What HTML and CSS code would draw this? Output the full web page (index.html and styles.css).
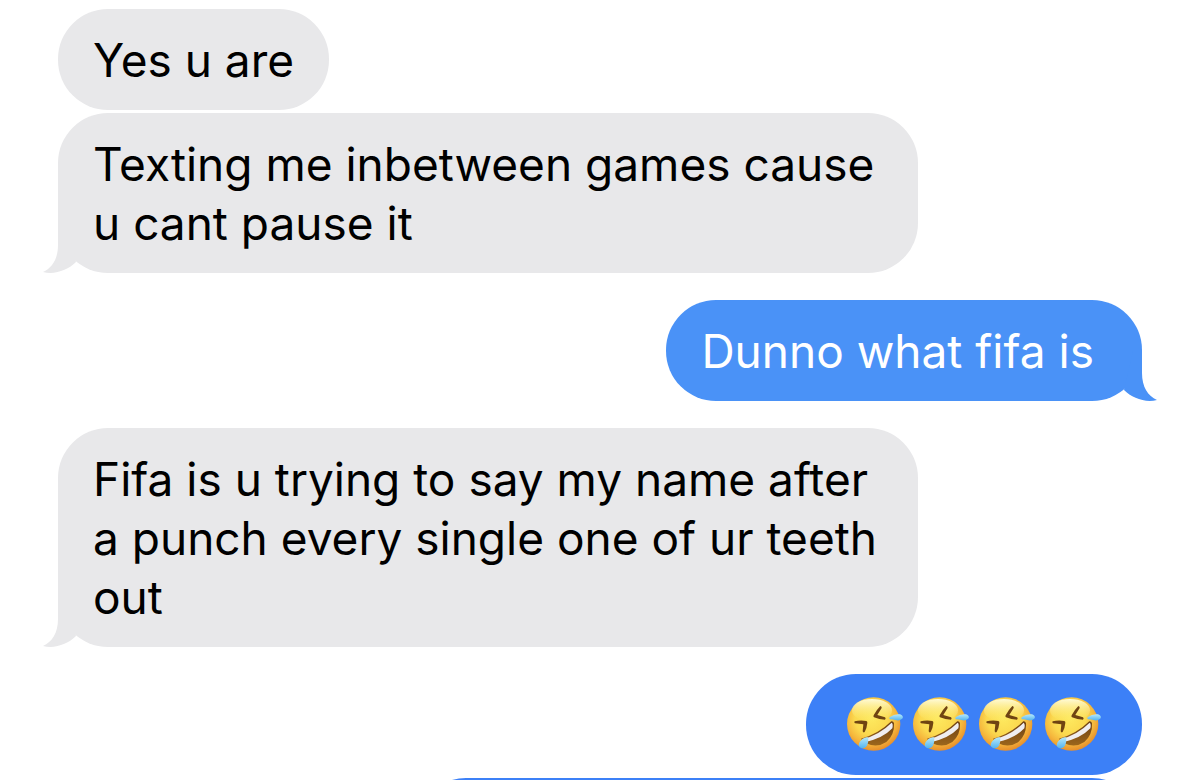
FILE: index.html
```html
<!DOCTYPE html>
<html lang="en">
<head>
  <meta charset="UTF-8">
  <meta name="viewport" content="width=device-width, initial-scale=1">
  <title>Messages</title>
  <link rel="stylesheet" href="styles.css">
</head>
<body>

  <!-- Shared shapes -->
  <svg class="shapes" aria-hidden="true">
    <defs>
      <radialGradient id="face" gradientUnits="userSpaceOnUse" cx="94" cy="82" r="100">
        <stop offset="0" stop-color="#fde95f"/>
        <stop offset="0.5" stop-color="#fbd94f"/>
        <stop offset="0.76" stop-color="#f5b63c"/>
        <stop offset="1" stop-color="#e58a2a"/>
      </radialGradient>
      <linearGradient id="shine" x1="0" y1="0" x2="0" y2="1">
        <stop offset="0" stop-color="#fffbd8"/>
        <stop offset="1" stop-color="#fdec6c" stop-opacity="0"/>
      </linearGradient>
      <linearGradient id="tear" x1="0" y1="0" x2="0" y2="1">
        <stop offset="0" stop-color="#b5e8fb"/>
        <stop offset="1" stop-color="#55b4ee"/>
      </linearGradient>
      <linearGradient id="mouth" x1="0" y1="0" x2="0" y2="1">
        <stop offset="0" stop-color="#6b3f14"/>
        <stop offset="1" stop-color="#9c661c"/>
      </linearGradient>
    </defs>
    <symbol id="tail" viewBox="0 0 36 50">
      <path d="M15 0 V22 C15 36 9 45 0 49 C12 52 25 47 33 39 L24 0 Z"/>
    </symbol>
    <symbol id="rofl" viewBox="6 15 198 177">
      <circle cx="101" cy="99" r="80" fill="url(#face)"/>
      <ellipse cx="96" cy="58" rx="60" ry="34" fill="url(#shine)"/>
      <g fill="#6f4412">
        <path d="M121 45 Q126 46 125 51 L112 72 L135 79 Q139 82 135 86 Q118 86 102 79 Q99 77 101 73 Q110 56 121 45 Z"/>
        <path d="M44 91 Q61 87 79 90 Q83 92 82 96 Q81 110 74 123 Q70 126 68 121 L70 100 L45 97 Q41 94 44 91 Z"/>
      </g>
      <path d="M63 143 Q114 130 154 91 Q160 90 162 97 Q164 132 139 153 Q111 172 79 157 Q66 151 63 143 Z" fill="url(#mouth)"/>
      <path d="M66 145 Q118 132 155 95 Q160 99 157 112 Q130 141 77 153 Q69 150 66 145 Z" fill="#efedf0"/>
      <path d="M150 78 Q163 68 180 70 Q191 74 188 82 Q181 91 166 87 Q158 84 150 85 Q145 81 150 78 Z" fill="url(#tear)"/>
      <path d="M80 139 Q85 138 85 143 Q85 155 81 164 Q74 174 63 171 Q52 166 59 153 Q68 141 80 139 Z" fill="url(#tear)"/>
    </symbol>
  </svg>

  <main class="chat">
    <div class="bubble received">Yes u are</div>
    <div class="bubble received last">
      Texting me inbetween games cause u cant pause it
      <svg class="tail"><use href="#tail"/></svg>
    </div>

    <div class="bubble sent last">
      Dunno what fifa is
      <svg class="tail"><use href="#tail"/></svg>
    </div>

    <div class="bubble received last">
      Fifa is u trying to say my name after a punch every single one of ur teeth out
      <svg class="tail"><use href="#tail"/></svg>
    </div>

    <div class="bubble sent later emojis" role="img" aria-label="Rolling on the floor laughing, four times">
      <svg class="emoji"><use href="#rofl"/></svg>
      <svg class="emoji"><use href="#rofl"/></svg>
      <svg class="emoji"><use href="#rofl"/></svg>
      <svg class="emoji"><use href="#rofl"/></svg>
    </div>
    <div class="bubble sent later next"></div>
  </main>

</body>
</html>
```
FILE: styles.css
```css
* {
  box-sizing: border-box;
}

body {
  margin: 0;
  height: 100vh;
  overflow: hidden;
  background-color: #fff;
  font-family: Inter, "Liberation Sans", sans-serif;
  font-size: 46px;
  line-height: 59px;
  color: #000;
}

.shapes {
  position: absolute;
  width: 0;
  height: 0;
}

.chat {
  display: flex;
  flex-direction: column;
  gap: 3px;
  padding: 9px 58px;
}

.bubble {
  position: relative;
  max-width: 860px;
  padding: 22px 35px 20px;
  border-radius: 50px;
}

.received {
  align-self: flex-start;
  background-color: #e8e8ea;
  fill: #e8e8ea;
}

.sent {
  align-self: flex-end;
  background-color: #4a92f7;
  fill: #4a92f7;
  color: #fff;
}

.later {
  background-color: #3c80f7;
}

/* last bubble of a group */
.last {
  margin-bottom: 24px;
}

.sent.last {
  padding-right: 48px;
}

.tail {
  position: absolute;
  bottom: 0;
  left: -15px;
  width: 36px;
  height: 50px;
}

.sent .tail {
  left: auto;
  right: -15px;
  transform: scaleX(-1);
}

.emojis {
  display: flex;
  padding-left: 36px;
  padding-right: 36px;
}

.emoji {
  width: 66px;
  height: 59px;
}

.next {
  width: 726px;
  min-height: 160px;
}
```
